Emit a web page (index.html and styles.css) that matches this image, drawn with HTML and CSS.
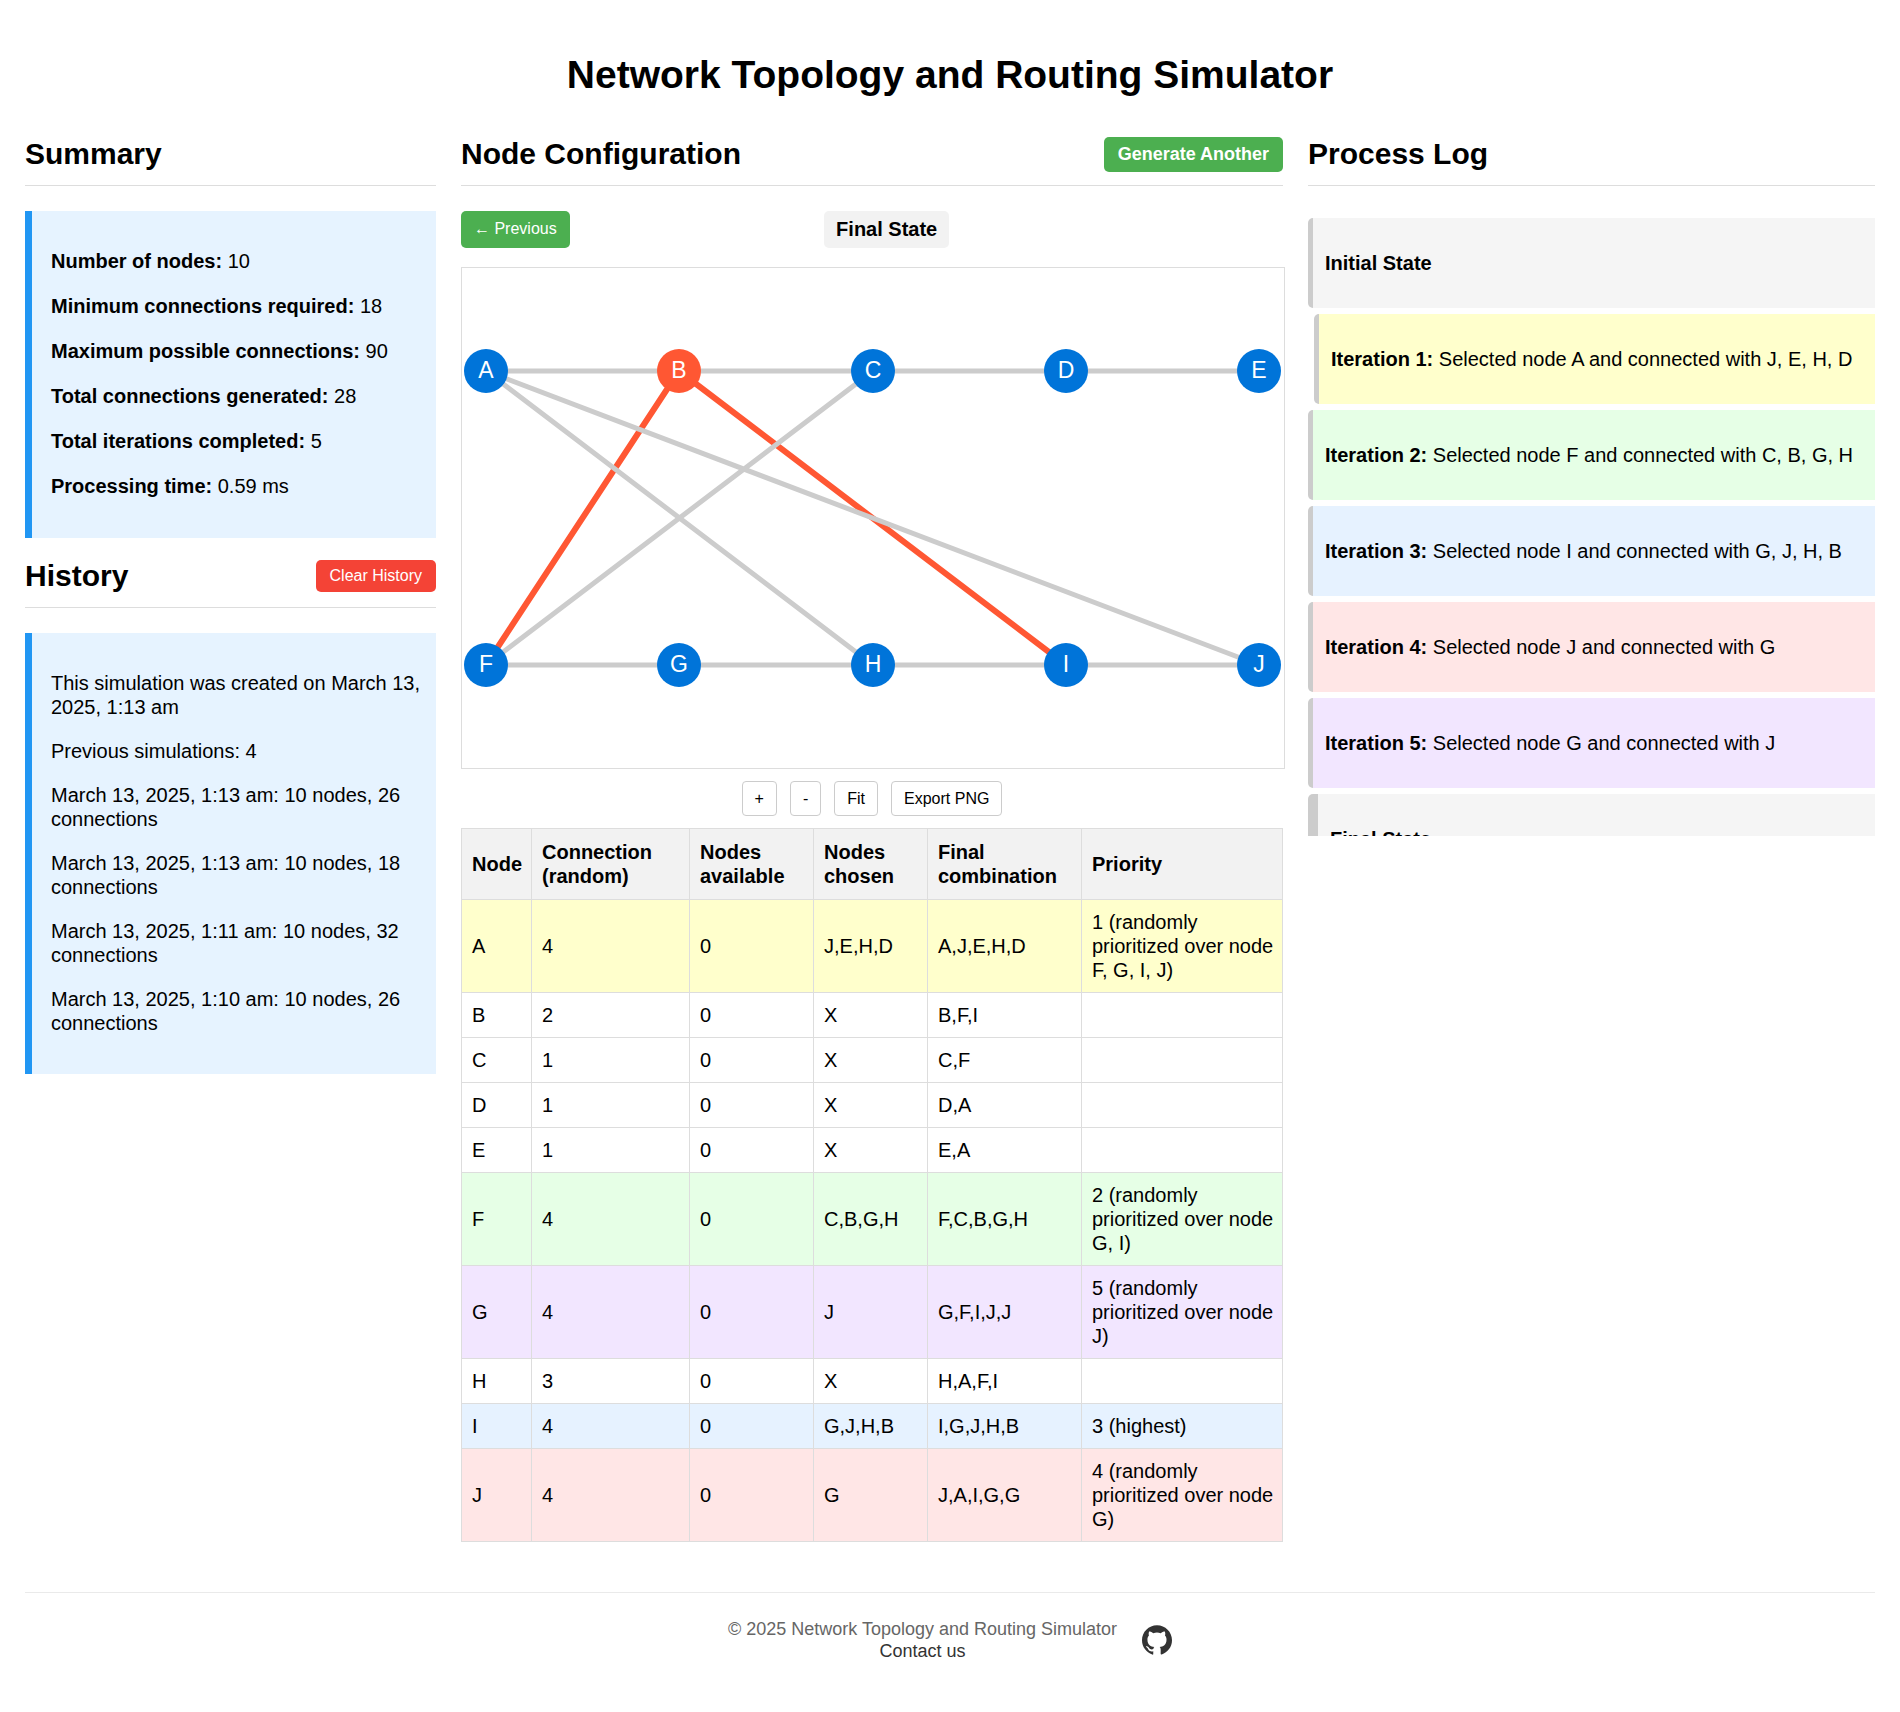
FILE: index.html
```html
<!DOCTYPE html>
<html lang="en">
<head>
<meta charset="utf-8">
<meta name="viewport" content="width=device-width, initial-scale=1">
<title>Network Topology and Routing Simulator</title>
<link rel="stylesheet" href="styles.css">
</head>
<body>
<header class="page-header">
  <h1>Network Topology and Routing Simulator</h1>
</header>
<main class="columns">
  <div class="column">
    <section>
      <div class="section-header"><h2>Summary</h2></div>
      <div class="info-box stats">
        <p><strong>Number of nodes:</strong> 10</p>
        <p><strong>Minimum connections required:</strong> 18</p>
        <p><strong>Maximum possible connections:</strong> 90</p>
        <p><strong>Total connections generated:</strong> 28</p>
        <p><strong>Total iterations completed:</strong> 5</p>
        <p><strong>Processing time:</strong> 0.59 ms</p>
      </div>
    </section>
    <section>
      <div class="section-header"><h2>History</h2><button type="button" class="btn btn-clear">Clear History</button></div>
      <div class="info-box">
        <p>This simulation was created on March 13, 2025, 1:13 am</p>
        <p>Previous simulations: 4</p>
        <p>March 13, 2025, 1:13 am: 10 nodes, 26 connections</p>
        <p>March 13, 2025, 1:13 am: 10 nodes, 18 connections</p>
        <p>March 13, 2025, 1:11 am: 10 nodes, 32 connections</p>
        <p>March 13, 2025, 1:10 am: 10 nodes, 26 connections</p>
      </div>
    </section>
  </div>

  <section class="column-main">
    <div class="section-header"><h2>Node Configuration</h2><button type="button" class="btn btn-generate">Generate Another</button></div>
    <div class="state-nav">
      <button type="button" class="btn btn-step">← Previous</button>
      <span class="state-label">Final State</span>
      <button type="button" class="btn btn-step is-hidden">Next →</button>
    </div>
    <div class="graph">
      <svg viewBox="0 0 822 500" role="img" aria-label="Network graph">
        <g class="edge-active">
          <path d="M217 103L24 397M217 103L604 397"/>
        </g>
        <g class="edge">
          <path d="M24 103H797M24 397H797M24 103L411 397M24 103L797 397M411 103L24 397"/>
        </g>
        <g class="node">
          <circle cx="24" cy="103" r="22"/>
          <circle class="node-active" cx="217" cy="103" r="22"/>
          <circle cx="411" cy="103" r="22"/>
          <circle cx="604" cy="103" r="22"/>
          <circle cx="797" cy="103" r="22"/>
          <circle cx="24" cy="397" r="22"/>
          <circle cx="217" cy="397" r="22"/>
          <circle cx="411" cy="397" r="22"/>
          <circle cx="604" cy="397" r="22"/>
          <circle cx="797" cy="397" r="22"/>
        </g>
        <g class="node-label">
          <text x="24" y="110">A</text>
          <text x="217" y="110">B</text>
          <text x="411" y="110">C</text>
          <text x="604" y="110">D</text>
          <text x="797" y="110">E</text>
          <text x="24" y="404">F</text>
          <text x="217" y="404">G</text>
          <text x="411" y="404">H</text>
          <text x="604" y="404">I</text>
          <text x="797" y="404">J</text>
        </g>
      </svg>
    </div>
    <div class="graph-controls">
      <button type="button" class="btn-tool">+</button>
      <button type="button" class="btn-tool">-</button>
      <button type="button" class="btn-tool">Fit</button>
      <button type="button" class="btn-tool">Export PNG</button>
    </div>
    <table class="node-table">
      <colgroup><col class="c-node"><col class="c-conn"><col class="c-avail"><col class="c-chosen"><col class="c-final"><col></colgroup>
      <thead>
        <tr><th>Node</th><th>Connection (random)</th><th>Nodes available</th><th>Nodes chosen</th><th>Final combination</th><th>Priority</th></tr>
      </thead>
      <tbody>
        <tr class="it1"><td>A</td><td>4</td><td>0</td><td>J,E,H,D</td><td>A,J,E,H,D</td><td>1 (randomly prioritized over node F, G, I, J)</td></tr>
        <tr><td>B</td><td>2</td><td>0</td><td>X</td><td>B,F,I</td><td></td></tr>
        <tr><td>C</td><td>1</td><td>0</td><td>X</td><td>C,F</td><td></td></tr>
        <tr><td>D</td><td>1</td><td>0</td><td>X</td><td>D,A</td><td></td></tr>
        <tr><td>E</td><td>1</td><td>0</td><td>X</td><td>E,A</td><td></td></tr>
        <tr class="it2"><td>F</td><td>4</td><td>0</td><td>C,B,G,H</td><td>F,C,B,G,H</td><td>2 (randomly prioritized over node G, I)</td></tr>
        <tr class="it5"><td>G</td><td>4</td><td>0</td><td>J</td><td>G,F,I,J,J</td><td>5 (randomly prioritized over node J)</td></tr>
        <tr><td>H</td><td>3</td><td>0</td><td>X</td><td>H,A,F,I</td><td></td></tr>
        <tr class="it3"><td>I</td><td>4</td><td>0</td><td>G,J,H,B</td><td>I,G,J,H,B</td><td>3 (highest)</td></tr>
        <tr class="it4"><td>J</td><td>4</td><td>0</td><td>G</td><td>J,A,I,G,G</td><td>4 (randomly prioritized over node G)</td></tr>
      </tbody>
    </table>
  </section>

  <section class="column-log">
    <div class="section-header"><h2>Process Log</h2></div>
    <div class="log">
      <div class="log-item"><p><strong>Initial State</strong></p></div>
      <div class="log-item it1 is-shifted"><p><strong>Iteration 1:</strong> Selected node A and connected with J, E, H, D</p></div>
      <div class="log-item it2"><p><strong>Iteration 2:</strong> Selected node F and connected with C, B, G, H</p></div>
      <div class="log-item it3"><p><strong>Iteration 3:</strong> Selected node I and connected with G, J, H, B</p></div>
      <div class="log-item it4"><p><strong>Iteration 4:</strong> Selected node J and connected with G</p></div>
      <div class="log-item it5"><p><strong>Iteration 5:</strong> Selected node G and connected with J</p></div>
      <div class="log-item is-current"><p><strong>Final State</strong></p></div>
    </div>
  </section>
</main>
<footer class="page-footer">
  <div class="footer-text">
    <div>© 2025 Network Topology and Routing Simulator</div>
    <a href="#contact">Contact us</a>
  </div>
  <a class="github" href="#github" aria-label="GitHub">
    <svg viewBox="0 0 24 24" aria-hidden="true"><path d="M12 .297c-6.63 0-12 5.373-12 12 0 5.303 3.438 9.8 8.205 11.385.6.113.82-.258.82-.577 0-.285-.01-1.04-.015-2.04-3.338.724-4.042-1.61-4.042-1.61C4.422 18.07 3.633 17.7 3.633 17.7c-1.087-.744.084-.729.084-.729 1.205.084 1.838 1.236 1.838 1.236 1.07 1.835 2.809 1.305 3.495.998.108-.776.417-1.305.76-1.605-2.665-.3-5.466-1.332-5.466-5.93 0-1.31.465-2.38 1.235-3.22-.135-.303-.54-1.523.105-3.176 0 0 1.005-.322 3.3 1.23.96-.267 1.98-.399 3-.405 1.02.006 2.04.138 3 .405 2.28-1.552 3.285-1.23 3.285-1.23.645 1.653.24 2.873.12 3.176.765.84 1.23 1.91 1.23 3.22 0 4.61-2.805 5.625-5.475 5.92.42.36.81 1.096.81 2.22 0 1.606-.015 2.896-.015 3.286 0 .315.21.69.825.57C20.565 22.092 24 17.592 24 12.297c0-6.627-5.373-12-12-12"/></svg>
  </a>
</footer>
</body>
</html>
```
FILE: styles.css
```css
* { box-sizing: border-box; }
body {
  margin: 0;
  padding: 25px;
  background: #fff;
  color: #000;
  font: 20px/24px "Liberation Sans", Arial, sans-serif;
}
h1, h2, p { margin: 0; }
h1 { font-size: 39px; line-height: 46px; text-align: center; }
h2 { font-size: 30px; line-height: 36px; }
button { font: inherit; font-size: 16px; line-height: 20px; cursor: pointer; }

.page-header { padding: 27px 0 37px; }

.columns {
  display: grid;
  grid-template-columns: 411fr 822fr 567fr;
  gap: 25px;
  align-items: start;
}
.columns > * { min-width: 0; }
.column { display: flex; flex-direction: column; gap: 19px; }

.section-header {
  display: flex;
  justify-content: space-between;
  align-items: center;
  height: 51px;
  padding: 1px 0 13px;
  margin-bottom: 25px;
  border-bottom: 1px solid #ddd;
}

.info-box {
  display: flex;
  flex-direction: column;
  gap: 20px;
  padding: 38px 12px 39px 19px;
  border-left: 7px solid #2196f3;
  background: #e6f3ff;
}
.stats { line-height: 25px; }

.btn { border: 0; border-radius: 5px; color: #fff; background: #4caf50; }
.btn-clear { padding: 6px 14px; background: #f44336; }
.btn-generate { padding: 7px 14px 8px; font-size: 18px; font-weight: bold; }
.btn-step { padding: 8px 13px 9px; }
.is-hidden { visibility: hidden; }

.state-nav { display: flex; justify-content: space-between; margin-bottom: 19px; }
.state-label {
  padding: 6px 12px 7px;
  border-radius: 5px;
  background: #f2f2f2;
  font-weight: bold;
}

.graph { border: 1px solid #ddd; margin-right: -2px; }
.graph svg { display: block; width: 100%; height: 500px; }
.edge { stroke: #ccc; stroke-width: 5; }
.edge-active { stroke: #ff5733; stroke-width: 6; }
.node { fill: #0074d9; }
.node-active { fill: #ff5733; }
.node-label { fill: #fff; font-size: 23px; text-anchor: middle; }

.graph-controls { display: flex; justify-content: center; gap: 13px; padding: 12px 0; }
.btn-tool {
  padding: 7px 12px 6px;
  border: 1px solid #ccc;
  border-radius: 4px;
  background: #fff;
  color: #000;
}

.node-table { width: 100%; table-layout: fixed; border-collapse: collapse; }
.node-table th, .node-table td { padding: 10px 6px 10px 10px; border: 1px solid #ddd; text-align: left; }
.node-table th { padding: 11px 6px 11px 10px; background: #f2f2f2; }
.c-node { width: 70px; }
.c-conn { width: 158px; }
.c-avail { width: 124px; }
.c-chosen { width: 114px; }
.c-final { width: 154px; }

.log { max-height: 625px; padding-top: 7px; overflow-y: auto; scrollbar-width: none; }
.log-item {
  margin-bottom: 6px;
  padding: 33px 12px;
  border-left: 5px solid #ccc;
  border-radius: 5px 0 0 5px;
  background: #f5f5f5;
}
.is-shifted { margin-left: 6px; }
.is-current { border-left-width: 10px; }

.it1 { background: #ffffcc; }
.it2 { background: #e6ffe6; }
.it3 { background: #e6f2ff; }
.it4 { background: #ffe6e6; }
.it5 { background: #f2e6ff; }

.page-footer {
  display: flex;
  justify-content: center;
  align-items: center;
  gap: 25px;
  margin-top: 50px;
  padding: 25px 0;
  border-top: 1px solid #eaeaea;
  color: #666;
  font-size: 18px;
  line-height: 22px;
  text-align: center;
}
.page-footer a { color: #333; text-decoration: none; }
.github svg { display: block; width: 30px; height: 30px; fill: #333; }
```
